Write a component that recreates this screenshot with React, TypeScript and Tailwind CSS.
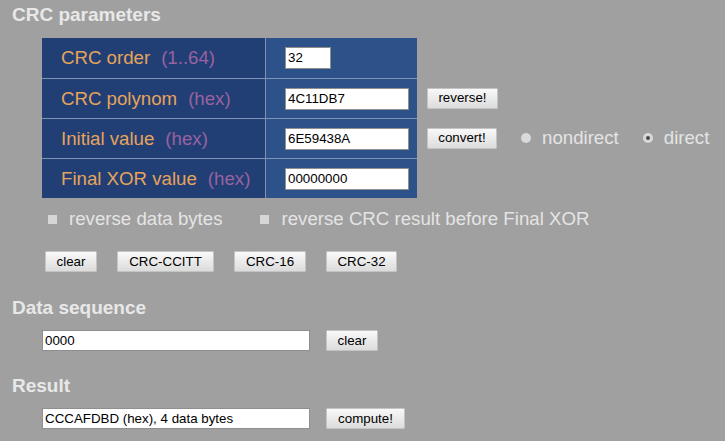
import React from "react";

const font = "font-['Liberation_Sans',Arial,sans-serif]";

function Btn({ w, children }: { w: string; children: React.ReactNode }) {
  return (
    <div
      className={`${w} h-[21px] flex items-center justify-center text-[13.33px] text-black bg-gradient-to-b from-[#f9f9f9] to-[#dcdcdc] border border-[#c4c4c4] rounded-[1px] shrink-0`}
    >
      {children}
    </div>
  );
}

function Input({ w, h = "h-[22px]", value }: { w: string; h?: string; value: string }) {
  return (
    <div
      className={`${w} ${h} bg-white border border-[#8f8f8f] text-[13.33px] text-black flex items-center pl-[2px] shrink-0`}
    >
      {value}
    </div>
  );
}

function Row({
  first,
  label,
  hint,
  input,
  extra,
}: {
  first?: boolean;
  label: string;
  hint: string;
  input: React.ReactNode;
  extra?: React.ReactNode;
}) {
  return (
    <div className="flex items-center">
      <div className={`flex h-[40px] ${first ? "" : "border-t border-[#7f93b6]"}`}>
        <div className="w-[223px] bg-[#213f75] flex items-center pl-[19px] text-[18.67px]">
          <span className="text-[#e6a35c]">{label}</span>
          <span className="ml-[11px] text-[#9a62a0]">{hint}</span>
        </div>
        <div className="w-[1px] bg-[#7f93b6]" />
        <div className="w-[151px] bg-[#2d5189] flex items-center pl-[19px]">{input}</div>
      </div>
      {extra}
    </div>
  );
}

export default function App() {
  return (
    <div className={`${font} w-[725px] h-[441px] bg-[#a0a0a0] pl-[12px] pt-[5px] overflow-hidden`}>
      <div className="text-[19px] leading-[19px] font-bold text-[#e8e8e8]">CRC parameters</div>

      <div className="mt-[14px] ml-[30px]">
        <Row first label="CRC order" hint="(1..64)" input={<Input w="w-[46px]" value="32" />} />
        <Row
          label="CRC polynom"
          hint="(hex)"
          input={<Input w="w-[124px]" value="4C11DB7" />}
          extra={
            <div className="ml-[10px]">
              <Btn w="w-[71px]">reverse!</Btn>
            </div>
          }
        />
        <Row
          label="Initial value"
          hint="(hex)"
          input={<Input w="w-[124px]" value="6E59438A" />}
          extra={
            <div className="ml-[10px] flex items-center">
              <Btn w="w-[70px]">convert!</Btn>
              <div className="ml-[24px] w-[10px] h-[10px] rounded-full bg-[#d9d9d9]" />
              <span className="ml-[11px] text-[18.67px] text-[#e4e4e4]">nondirect</span>
              <div className="ml-[24px] w-[10px] h-[10px] rounded-full bg-[#d9d9d9] flex items-center justify-center">
                <div className="w-[4px] h-[4px] rounded-full bg-[#4a4a4a]" />
              </div>
              <span className="ml-[11px] text-[18.67px] text-[#e4e4e4]">direct</span>
            </div>
          }
        />
        <Row label="Final XOR value" hint="(hex)" input={<Input w="w-[124px]" value="00000000" />} />
      </div>

      <div className="mt-[9px] ml-[36px] h-[24px] flex items-center text-[18.67px] text-[#e4e4e4]">
        <div className="w-[9px] h-[9px] bg-[#d6d6d6]" />
        <span className="ml-[12px]">reverse data bytes</span>
        <div className="ml-[38px] w-[9px] h-[9px] bg-[#d6d6d6]" />
        <span className="ml-[12px]">reverse CRC result before Final XOR</span>
      </div>

      <div className="mt-[20px] ml-[33px] flex gap-[20px]">
        <Btn w="w-[52px]">clear</Btn>
        <Btn w="w-[97px]">CRC-CCITT</Btn>
        <Btn w="w-[72px]">CRC-16</Btn>
        <Btn w="w-[71px]">CRC-32</Btn>
      </div>

      <div className="mt-[26px] text-[19px] leading-[19px] font-bold text-[#e8e8e8]">Data sequence</div>
      <div className="mt-[13px] ml-[30px] flex items-center">
        <Input w="w-[268px]" h="h-[21px]" value="0000" />
        <div className="ml-[16px]">
          <Btn w="w-[52px]">clear</Btn>
        </div>
      </div>

      <div className="mt-[25px] text-[19px] leading-[19px] font-bold text-[#e8e8e8]">Result</div>
      <div className="mt-[13px] ml-[30px] flex items-center">
        <Input w="w-[268px]" h="h-[21px]" value="CCCAFDBD (hex), 4 data bytes" />
        <div className="ml-[16px]">
          <Btn w="w-[79px]">compute!</Btn>
        </div>
      </div>
    </div>
  );
}
